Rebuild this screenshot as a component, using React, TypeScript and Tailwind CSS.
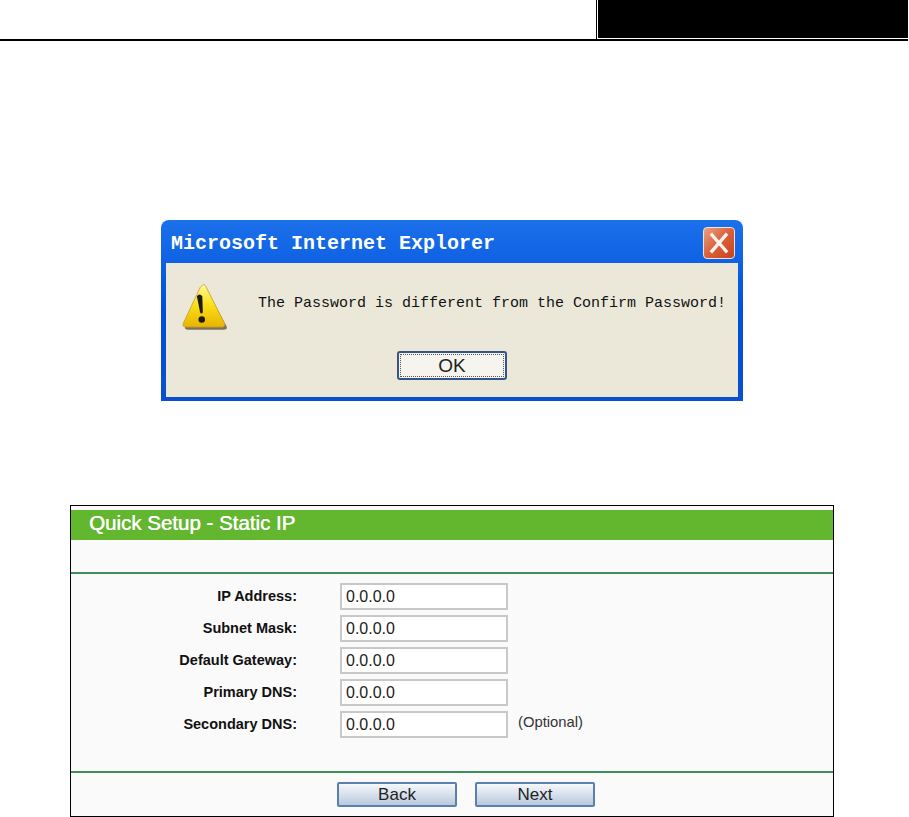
const fields = [
  { label: "IP Address:", note: "" },
  { label: "Subnet Mask:", note: "" },
  { label: "Default Gateway:", note: "" },
  { label: "Primary DNS:", note: "" },
  { label: "Secondary DNS:", note: "(Optional)" },
];

function WarningIcon() {
  return (
    <svg width="52" height="52" viewBox="0 0 48 48">
      <defs>
        <linearGradient id="warn" x1="0" y1="0" x2="0" y2="1">
          <stop offset="0" stopColor="#fff7a0" />
          <stop offset="0.45" stopColor="#fbe21a" />
          <stop offset="1" stopColor="#e8b400" />
        </linearGradient>
      </defs>
      <path d="M24 5 L44 42 Q45 45 41 45 L9 45 Q4 45 6 41 L20 7 Q22 3 24 5Z" fill="#5a4a2a" opacity="0.75" />
      <path d="M21.5 4 Q23 2 24.5 4.5 L42 39 Q43 42 40 42.5 L6 42.5 Q2.5 42 4 39 L19.5 6Z" fill="url(#warn)" stroke="#c9a227" strokeWidth="0.8" />
      <path d="M16.5 14 Q19 11 21.5 14 L22 29 Q20.5 31 19.5 29Z" fill="#1d1a12" />
      <circle cx="21" cy="35.5" r="3" fill="#1d1a12" />
    </svg>
  );
}

function CloseButton() {
  return (
    <div className="w-[32px] h-[32px] rounded-[4px] border border-[#f0e4dc] bg-gradient-to-br from-[#e8a080] via-[#d9603a] to-[#c8401c] flex items-center justify-center">
      <svg width="22" height="22" viewBox="0 0 22 22">
        <path d="M4 3 L18 19 M18 3 L4 19" stroke="#fdf3ee" strokeWidth="3.4" strokeLinecap="square" />
      </svg>
    </div>
  );
}

function WebButton({ label }: { label: string }) {
  return (
    <button className="w-[120px] h-[25px] rounded-[2px] border-2 border-[#5b7fae] bg-gradient-to-b from-[#f6f8fb] to-[#b9c9de] text-[17px] text-[#222] leading-none font-['Liberation_Sans',sans-serif]">
      {label}
    </button>
  );
}

export default function App() {
  return (
    <div className="w-[909px] h-[817px] bg-white overflow-hidden flex flex-col font-['Liberation_Sans',sans-serif]">
      {/* Page header */}
      <header className="h-[41px] w-[908px] border-b-[2px] border-black flex justify-end shrink-0">
        <div className="w-[312px] h-[39px] bg-black border-l-[1px] border-black">
          <div className="h-full border-l-[1px] border-b-[1px] border-white bg-black" />
        </div>
      </header>

      {/* Alert dialog */}
      <div className="mt-[179px] ml-[161px] w-[582px] h-[181px] shrink-0 rounded-t-[8px] bg-gradient-to-b from-[#1c70ea] via-[#0050dc] to-[#0a4fd2] flex flex-col">
        <div className="h-[43px] flex items-center justify-between pl-[10px] pr-[8px] pt-[3px] shrink-0">
          <span className="text-white font-bold text-[20px] mt-[1px] font-['Liberation_Mono',monospace] whitespace-pre">Microsoft Internet Explorer</span>
          <CloseButton />
        </div>
        <div className="mx-[5px] mb-[4px] flex-1 bg-[#ebe8da] flex flex-col">
          <div className="flex items-start pl-[13px] pt-[18px]">
            <WarningIcon />
            <span className="ml-[27px] mt-[13px] text-[15px] leading-[20px] text-[#111] font-['Liberation_Mono',monospace] whitespace-pre">The Password is different from the Confirm Password!</span>
          </div>
          <div className="flex justify-center mt-[18px]">
            <button className="w-[110px] h-[29px] rounded-[3px] border-2 border-[#34558a] bg-[#f5f4ee] text-[19px] text-[#222] leading-none outline-1 outline-dotted -outline-offset-4 outline-[#555]">
              OK
            </button>
          </div>
        </div>
      </div>

      {/* Quick setup panel */}
      <section className="mt-[104px] ml-[70px] w-[764px] h-[312px] shrink-0 border border-black bg-[#fafafa] flex flex-col">
        <div className="h-[4px] bg-[#fafafa] shrink-0" />
        <h1 className="h-[30px] bg-[#63b72f] text-white text-[20.5px] font-normal pl-[18px] leading-[26px] [text-shadow:0.4px_0_0_white] shrink-0">Quick Setup - Static IP</h1>
        <div className="h-[34px] border-b-[2px] border-[#3f8f5e] shrink-0" />
        <div className="flex flex-col gap-[5px] pt-[9px] h-[199px] border-b-[2px] border-[#3f8f5e] shrink-0">
          {fields.map((f) => (
            <div key={f.label} className="flex items-center h-[27px]">
              <label className="w-[226px] text-right text-[14.5px] font-bold text-[#111]">{f.label}</label>
              <input
                readOnly
                value="0.0.0.0"
                className="ml-[43px] w-[168px] h-[27px] border-2 border-[#c8c8c8] bg-white px-[4px] text-[16px] text-[#222] outline-none"
              />
              {f.note && <span className="ml-[10px] mb-[4px] text-[14.8px] text-[#333]">{f.note}</span>}
            </div>
          ))}
        </div>
        <div className="flex flex-1 items-center gap-[18px] pl-[266px]">
          <WebButton label="Back" />
          <WebButton label="Next" />
        </div>
      </section>
    </div>
  );
}
